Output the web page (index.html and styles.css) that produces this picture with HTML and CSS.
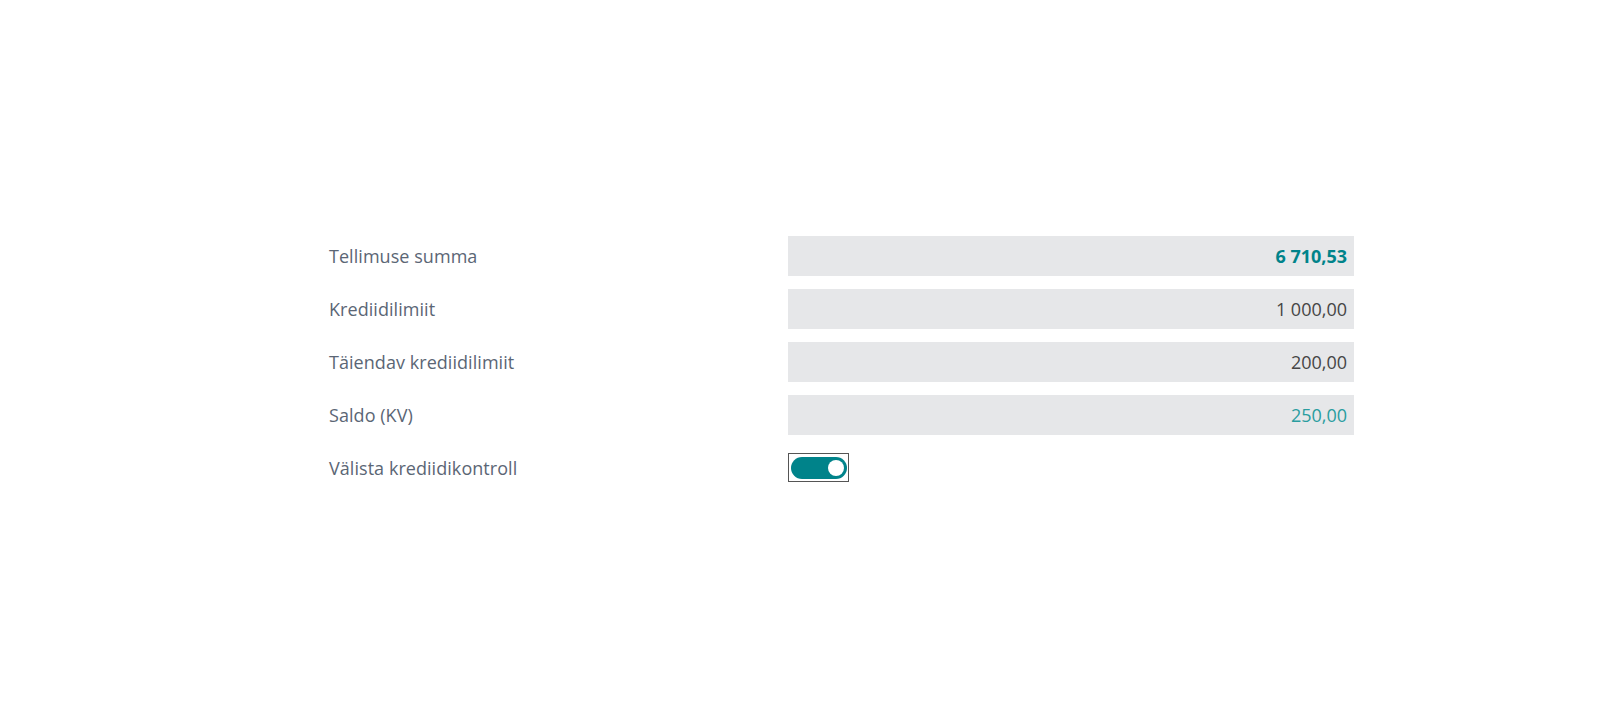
FILE: index.html
```html
<!DOCTYPE html>
<html lang="et">
<head>
<meta charset="utf-8">
<title>Krediidikontroll</title>
<link rel="stylesheet" href="styles.css">
</head>
<body>
<main class="page">
  <div class="form">
    <div class="row">
      <div class="label">Tellimuse summa</div>
      <div class="field"><span class="value value-strong">6 710,53</span></div>
    </div>
    <div class="row">
      <div class="label">Krediidilimiit</div>
      <div class="field"><span class="value">1 000,00</span></div>
    </div>
    <div class="row">
      <div class="label">Täiendav krediidilimiit</div>
      <div class="field"><span class="value">200,00</span></div>
    </div>
    <div class="row">
      <div class="label">Saldo (KV)</div>
      <div class="field"><span class="value value-link">250,00</span></div>
    </div>
    <div class="row row-toggle">
      <div class="label">Välista krediidikontroll</div>
      <div class="toggle-wrap">
        <span class="toggle"><span class="knob"></span></span>
      </div>
    </div>
  </div>
</main>
</body>
</html>
```
FILE: styles.css
```css
html, body {
  margin: 0;
  padding: 0;
  background: #ffffff;
}
body {
  font-family: "Open Sans", "Noto Sans", "Liberation Sans", sans-serif;
  width: 1600px;
  height: 720px;
}
.page {
  padding: 236px 0 0 329px;
}
.form {
  display: flex;
  flex-direction: column;
  gap: 13px;
  width: 1025px;
}
.row {
  display: grid;
  grid-template-columns: 459px 566px;
  align-items: center;
  height: 40px;
}
.label {
  font-size: 18px;
  color: #5b6675;
  white-space: nowrap;
  letter-spacing: 0.05px;
}
.field {
  height: 40px;
  background: #e6e7e9;
  display: flex;
  align-items: center;
  justify-content: flex-end;
  padding-right: 7px;
  box-sizing: border-box;
}
.value {
  font-size: 18px;
  color: #454545;
}
.value-strong {
  font-weight: 700;
  color: #00838a;
}
.value-link {
  color: #2a9d9f;
}
.row-toggle {
  height: 29px;
  margin-top: 5px;
}
.toggle-wrap {
  width: 61px;
  height: 29px;
  border: 1px solid #555555;
  box-sizing: border-box;
  display: flex;
  align-items: center;
  justify-content: center;
}
.toggle {
  width: 56px;
  height: 22px;
  border-radius: 11px;
  background: #00838a;
  display: flex;
  align-items: center;
  justify-content: flex-end;
  padding-right: 3px;
  box-sizing: border-box;
}
.knob {
  width: 16px;
  height: 16px;
  border-radius: 50%;
  background: #ffffff;
}
```
